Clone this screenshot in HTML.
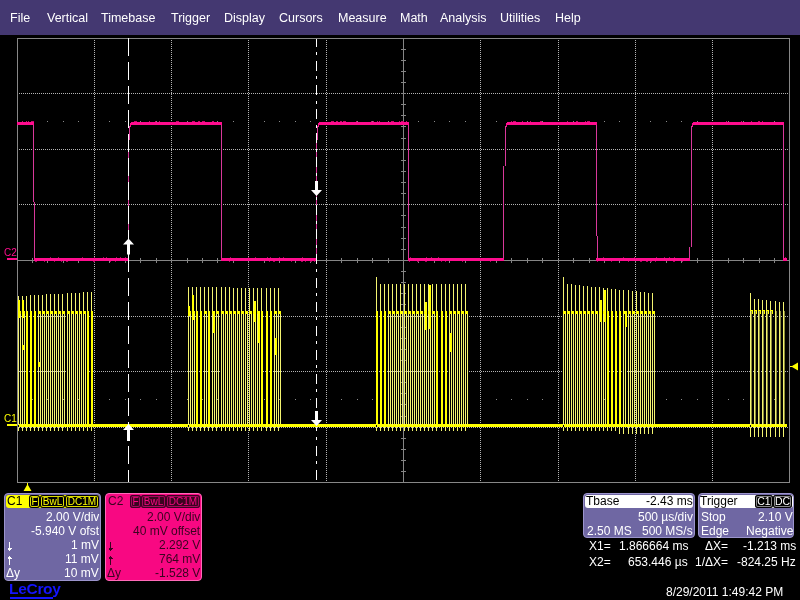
<!DOCTYPE html>
<html><head><meta charset="utf-8"><style>
*{margin:0;padding:0;box-sizing:border-box}
body{width:800px;height:600px;background:#000;overflow:hidden;position:relative;font-family:"Liberation Sans",sans-serif;-webkit-font-smoothing:antialiased}
#menu{position:absolute;left:0;top:0;width:800px;height:35px;background:#443871;color:#fff;font-size:12.5px}
#menu span{position:absolute;top:11px;line-height:14px;will-change:transform}
svg{position:absolute;left:0;top:0}
.t{position:absolute;font-size:12px;line-height:14px;white-space:nowrap;will-change:transform}
.r{text-align:right}
.w{color:#fff}
.k{color:#3a0420}
.pan{position:absolute;border-radius:4px}
.bd{will-change:transform;position:absolute;border-radius:3px;font-size:10px;line-height:13px;height:13px;text-align:center;top:495px}
</style></head><body>
<div id="menu">
<span style="left:10px">File</span>
<span style="left:47px">Vertical</span>
<span style="left:101px">Timebase</span>
<span style="left:171px">Trigger</span>
<span style="left:224px">Display</span>
<span style="left:279px">Cursors</span>
<span style="left:338px">Measure</span>
<span style="left:400px">Math</span>
<span style="left:440px">Analysis</span>
<span style="left:500px">Utilities</span>
<span style="left:555px">Help</span>
</div>
<svg width="800" height="600" shape-rendering="crispEdges">
<path d="M94.5 40V482 M171.5 40V482 M248.5 40V482 M326.5 40V482 M480.5 40V482 M558.5 40V482 M635.5 40V482 M712.5 40V482 M19 93.5H789 M19 149.5H789 M19 204.5H789 M19 316.5H789 M19 371.5H789 M19 427.5H789" stroke="#b4b4b4" stroke-width="1" stroke-dasharray="1 1" fill="none"/>
<path d="M17 260H789 M403 38V482" stroke="#858585" stroke-width="1" transform="translate(0.5 0.5)" fill="none"/>
<path d="M32.5 258V263 M47.5 258V263 M63.5 258V263 M78.5 258V263 M94.5 258V263 M109.5 258V263 M125.5 258V263 M140.5 258V263 M156.5 258V263 M171.5 258V263 M187.5 258V263 M202.5 258V263 M217.5 258V263 M233.5 258V263 M248.5 258V263 M264.5 258V263 M279.5 258V263 M295.5 258V263 M310.5 258V263 M326.5 258V263 M341.5 258V263 M357.5 258V263 M372.5 258V263 M388.5 258V263 M403.5 258V263 M418.5 258V263 M434.5 258V263 M449.5 258V263 M465.5 258V263 M480.5 258V263 M496.5 258V263 M511.5 258V263 M527.5 258V263 M542.5 258V263 M558.5 258V263 M573.5 258V263 M589.5 258V263 M604.5 258V263 M619.5 258V263 M635.5 258V263 M650.5 258V263 M666.5 258V263 M681.5 258V263 M697.5 258V263 M712.5 258V263 M728.5 258V263 M743.5 258V263 M759.5 258V263 M774.5 258V263 M401 49.5H406 M401 60.5H406 M401 71.5H406 M401 82.5H406 M401 93.5H406 M401 104.5H406 M401 115.5H406 M401 126.5H406 M401 138.5H406 M401 149.5H406 M401 160.5H406 M401 171.5H406 M401 182.5H406 M401 193.5H406 M401 204.5H406 M401 215.5H406 M401 227.5H406 M401 238.5H406 M401 249.5H406 M401 260.5H406 M401 271.5H406 M401 282.5H406 M401 293.5H406 M401 304.5H406 M401 316.5H406 M401 327.5H406 M401 338.5H406 M401 349.5H406 M401 360.5H406 M401 371.5H406 M401 382.5H406 M401 393.5H406 M401 404.5H406 M401 416.5H406 M401 427.5H406 M401 438.5H406 M401 449.5H406 M401 460.5H406 M401 471.5H406" stroke="#858585" stroke-width="1" fill="none"/>
<rect x="17.5" y="38.5" width="772" height="444" fill="none" stroke="#878787" stroke-width="1"/>
<rect x="32" y="121" width="1" height="1" fill="#8a8a8a" />
<rect x="47" y="121" width="1" height="1" fill="#8a8a8a" />
<rect x="63" y="121" width="1" height="1" fill="#8a8a8a" />
<rect x="78" y="121" width="1" height="1" fill="#8a8a8a" />
<rect x="109" y="121" width="1" height="1" fill="#8a8a8a" />
<rect x="125" y="121" width="1" height="1" fill="#8a8a8a" />
<rect x="140" y="121" width="1" height="1" fill="#8a8a8a" />
<rect x="156" y="121" width="1" height="1" fill="#8a8a8a" />
<rect x="187" y="121" width="1" height="1" fill="#8a8a8a" />
<rect x="202" y="121" width="1" height="1" fill="#8a8a8a" />
<rect x="217" y="121" width="1" height="1" fill="#8a8a8a" />
<rect x="233" y="121" width="1" height="1" fill="#8a8a8a" />
<rect x="264" y="121" width="1" height="1" fill="#8a8a8a" />
<rect x="279" y="121" width="1" height="1" fill="#8a8a8a" />
<rect x="295" y="121" width="1" height="1" fill="#8a8a8a" />
<rect x="310" y="121" width="1" height="1" fill="#8a8a8a" />
<rect x="341" y="121" width="1" height="1" fill="#8a8a8a" />
<rect x="357" y="121" width="1" height="1" fill="#8a8a8a" />
<rect x="372" y="121" width="1" height="1" fill="#8a8a8a" />
<rect x="388" y="121" width="1" height="1" fill="#8a8a8a" />
<rect x="418" y="121" width="1" height="1" fill="#8a8a8a" />
<rect x="434" y="121" width="1" height="1" fill="#8a8a8a" />
<rect x="449" y="121" width="1" height="1" fill="#8a8a8a" />
<rect x="465" y="121" width="1" height="1" fill="#8a8a8a" />
<rect x="496" y="121" width="1" height="1" fill="#8a8a8a" />
<rect x="511" y="121" width="1" height="1" fill="#8a8a8a" />
<rect x="527" y="121" width="1" height="1" fill="#8a8a8a" />
<rect x="542" y="121" width="1" height="1" fill="#8a8a8a" />
<rect x="573" y="121" width="1" height="1" fill="#8a8a8a" />
<rect x="589" y="121" width="1" height="1" fill="#8a8a8a" />
<rect x="604" y="121" width="1" height="1" fill="#8a8a8a" />
<rect x="619" y="121" width="1" height="1" fill="#8a8a8a" />
<rect x="650" y="121" width="1" height="1" fill="#8a8a8a" />
<rect x="666" y="121" width="1" height="1" fill="#8a8a8a" />
<rect x="681" y="121" width="1" height="1" fill="#8a8a8a" />
<rect x="697" y="121" width="1" height="1" fill="#8a8a8a" />
<rect x="728" y="121" width="1" height="1" fill="#8a8a8a" />
<rect x="743" y="121" width="1" height="1" fill="#8a8a8a" />
<rect x="759" y="121" width="1" height="1" fill="#8a8a8a" />
<rect x="774" y="121" width="1" height="1" fill="#8a8a8a" />
<rect x="32" y="399" width="1" height="1" fill="#8a8a8a" />
<rect x="47" y="399" width="1" height="1" fill="#8a8a8a" />
<rect x="63" y="399" width="1" height="1" fill="#8a8a8a" />
<rect x="78" y="399" width="1" height="1" fill="#8a8a8a" />
<rect x="109" y="399" width="1" height="1" fill="#8a8a8a" />
<rect x="125" y="399" width="1" height="1" fill="#8a8a8a" />
<rect x="140" y="399" width="1" height="1" fill="#8a8a8a" />
<rect x="156" y="399" width="1" height="1" fill="#8a8a8a" />
<rect x="187" y="399" width="1" height="1" fill="#8a8a8a" />
<rect x="202" y="399" width="1" height="1" fill="#8a8a8a" />
<rect x="217" y="399" width="1" height="1" fill="#8a8a8a" />
<rect x="233" y="399" width="1" height="1" fill="#8a8a8a" />
<rect x="264" y="399" width="1" height="1" fill="#8a8a8a" />
<rect x="279" y="399" width="1" height="1" fill="#8a8a8a" />
<rect x="295" y="399" width="1" height="1" fill="#8a8a8a" />
<rect x="310" y="399" width="1" height="1" fill="#8a8a8a" />
<rect x="341" y="399" width="1" height="1" fill="#8a8a8a" />
<rect x="357" y="399" width="1" height="1" fill="#8a8a8a" />
<rect x="372" y="399" width="1" height="1" fill="#8a8a8a" />
<rect x="388" y="399" width="1" height="1" fill="#8a8a8a" />
<rect x="418" y="399" width="1" height="1" fill="#8a8a8a" />
<rect x="434" y="399" width="1" height="1" fill="#8a8a8a" />
<rect x="449" y="399" width="1" height="1" fill="#8a8a8a" />
<rect x="465" y="399" width="1" height="1" fill="#8a8a8a" />
<rect x="496" y="399" width="1" height="1" fill="#8a8a8a" />
<rect x="511" y="399" width="1" height="1" fill="#8a8a8a" />
<rect x="527" y="399" width="1" height="1" fill="#8a8a8a" />
<rect x="542" y="399" width="1" height="1" fill="#8a8a8a" />
<rect x="573" y="399" width="1" height="1" fill="#8a8a8a" />
<rect x="589" y="399" width="1" height="1" fill="#8a8a8a" />
<rect x="604" y="399" width="1" height="1" fill="#8a8a8a" />
<rect x="619" y="399" width="1" height="1" fill="#8a8a8a" />
<rect x="650" y="399" width="1" height="1" fill="#8a8a8a" />
<rect x="666" y="399" width="1" height="1" fill="#8a8a8a" />
<rect x="681" y="399" width="1" height="1" fill="#8a8a8a" />
<rect x="697" y="399" width="1" height="1" fill="#8a8a8a" />
<rect x="728" y="399" width="1" height="1" fill="#8a8a8a" />
<rect x="743" y="399" width="1" height="1" fill="#8a8a8a" />
<rect x="759" y="399" width="1" height="1" fill="#8a8a8a" />
<rect x="774" y="399" width="1" height="1" fill="#8a8a8a" />
<rect x="17" y="122" width="17" height="3" fill="#ff0c8e"/>
<rect x="22" y="121" width="1" height="1" fill="#c00a6c"/>
<rect x="26" y="121" width="1" height="1" fill="#c00a6c"/>
<rect x="28" y="121" width="1" height="1" fill="#c00a6c"/>
<rect x="31" y="121" width="3" height="1" fill="#c00a6c"/>
<rect x="133" y="122" width="89" height="3" fill="#ff0c8e"/>
<rect x="134" y="121" width="3" height="1" fill="#c00a6c"/>
<rect x="149" y="121" width="1" height="1" fill="#c00a6c"/>
<rect x="155" y="121" width="1" height="1" fill="#c00a6c"/>
<rect x="159" y="121" width="1" height="1" fill="#c00a6c"/>
<rect x="176" y="121" width="3" height="1" fill="#c00a6c"/>
<rect x="192" y="121" width="3" height="1" fill="#c00a6c"/>
<rect x="198" y="121" width="2" height="1" fill="#c00a6c"/>
<rect x="202" y="121" width="3" height="1" fill="#c00a6c"/>
<rect x="212" y="121" width="2" height="1" fill="#c00a6c"/>
<rect x="320" y="122" width="89" height="3" fill="#ff0c8e"/>
<rect x="331" y="121" width="3" height="1" fill="#c00a6c"/>
<rect x="336" y="121" width="2" height="1" fill="#c00a6c"/>
<rect x="340" y="121" width="2" height="1" fill="#c00a6c"/>
<rect x="343" y="121" width="3" height="1" fill="#c00a6c"/>
<rect x="356" y="121" width="1" height="1" fill="#c00a6c"/>
<rect x="371" y="121" width="1" height="1" fill="#c00a6c"/>
<rect x="373" y="121" width="1" height="1" fill="#c00a6c"/>
<rect x="377" y="121" width="1" height="1" fill="#c00a6c"/>
<rect x="379" y="121" width="1" height="1" fill="#c00a6c"/>
<rect x="391" y="121" width="3" height="1" fill="#c00a6c"/>
<rect x="399" y="121" width="1" height="1" fill="#c00a6c"/>
<rect x="401" y="121" width="3" height="1" fill="#c00a6c"/>
<rect x="406" y="121" width="1" height="1" fill="#c00a6c"/>
<rect x="507" y="122" width="90" height="3" fill="#ff0c8e"/>
<rect x="511" y="121" width="1" height="1" fill="#c00a6c"/>
<rect x="513" y="121" width="3" height="1" fill="#c00a6c"/>
<rect x="522" y="121" width="1" height="1" fill="#c00a6c"/>
<rect x="530" y="121" width="1" height="1" fill="#c00a6c"/>
<rect x="540" y="121" width="2" height="1" fill="#c00a6c"/>
<rect x="567" y="121" width="1" height="1" fill="#c00a6c"/>
<rect x="576" y="121" width="2" height="1" fill="#c00a6c"/>
<rect x="585" y="121" width="1" height="1" fill="#c00a6c"/>
<rect x="587" y="121" width="3" height="1" fill="#c00a6c"/>
<rect x="695" y="122" width="89" height="3" fill="#ff0c8e"/>
<rect x="726" y="121" width="1" height="1" fill="#c00a6c"/>
<rect x="741" y="121" width="1" height="1" fill="#c00a6c"/>
<rect x="751" y="121" width="1" height="1" fill="#c00a6c"/>
<rect x="758" y="121" width="2" height="1" fill="#c00a6c"/>
<rect x="762" y="121" width="1" height="1" fill="#c00a6c"/>
<rect x="34" y="258" width="95" height="3" fill="#ff0c8e"/>
<rect x="35" y="261" width="2" height="1" fill="#a00a5c"/>
<rect x="44" y="261" width="1" height="1" fill="#a00a5c"/>
<rect x="50" y="257" width="1" height="1" fill="#a00a5c"/>
<rect x="54" y="261" width="1" height="1" fill="#a00a5c"/>
<rect x="58" y="257" width="1" height="1" fill="#a00a5c"/>
<rect x="61" y="261" width="1" height="1" fill="#a00a5c"/>
<rect x="66" y="261" width="2" height="1" fill="#a00a5c"/>
<rect x="82" y="257" width="1" height="1" fill="#a00a5c"/>
<rect x="93" y="261" width="2" height="1" fill="#a00a5c"/>
<rect x="94" y="257" width="1" height="1" fill="#a00a5c"/>
<rect x="103" y="257" width="1" height="1" fill="#a00a5c"/>
<rect x="106" y="257" width="1" height="1" fill="#a00a5c"/>
<rect x="110" y="261" width="1" height="1" fill="#a00a5c"/>
<rect x="115" y="261" width="1" height="1" fill="#a00a5c"/>
<rect x="116" y="257" width="1" height="1" fill="#a00a5c"/>
<rect x="120" y="257" width="1" height="1" fill="#a00a5c"/>
<rect x="125" y="257" width="1" height="1" fill="#a00a5c"/>
<rect x="221" y="258" width="96" height="3" fill="#ff0c8e"/>
<rect x="229" y="261" width="1" height="1" fill="#a00a5c"/>
<rect x="230" y="257" width="1" height="1" fill="#a00a5c"/>
<rect x="248" y="257" width="1" height="1" fill="#a00a5c"/>
<rect x="255" y="257" width="1" height="1" fill="#a00a5c"/>
<rect x="267" y="257" width="1" height="1" fill="#a00a5c"/>
<rect x="269" y="261" width="1" height="1" fill="#a00a5c"/>
<rect x="270" y="257" width="1" height="1" fill="#a00a5c"/>
<rect x="273" y="261" width="2" height="1" fill="#a00a5c"/>
<rect x="279" y="257" width="1" height="1" fill="#a00a5c"/>
<rect x="283" y="257" width="1" height="1" fill="#a00a5c"/>
<rect x="291" y="261" width="1" height="1" fill="#a00a5c"/>
<rect x="301" y="261" width="2" height="1" fill="#a00a5c"/>
<rect x="302" y="257" width="1" height="1" fill="#a00a5c"/>
<rect x="305" y="261" width="1" height="1" fill="#a00a5c"/>
<rect x="310" y="261" width="2" height="1" fill="#a00a5c"/>
<rect x="314" y="261" width="1" height="1" fill="#a00a5c"/>
<rect x="408" y="258" width="96" height="3" fill="#ff0c8e"/>
<rect x="409" y="261" width="1" height="1" fill="#a00a5c"/>
<rect x="410" y="257" width="1" height="1" fill="#a00a5c"/>
<rect x="417" y="261" width="2" height="1" fill="#a00a5c"/>
<rect x="425" y="261" width="2" height="1" fill="#a00a5c"/>
<rect x="426" y="257" width="1" height="1" fill="#a00a5c"/>
<rect x="431" y="257" width="1" height="1" fill="#a00a5c"/>
<rect x="438" y="257" width="1" height="1" fill="#a00a5c"/>
<rect x="441" y="261" width="1" height="1" fill="#a00a5c"/>
<rect x="445" y="261" width="1" height="1" fill="#a00a5c"/>
<rect x="462" y="261" width="1" height="1" fill="#a00a5c"/>
<rect x="490" y="261" width="1" height="1" fill="#a00a5c"/>
<rect x="596" y="258" width="94" height="3" fill="#ff0c8e"/>
<rect x="597" y="261" width="1" height="1" fill="#a00a5c"/>
<rect x="603" y="257" width="1" height="1" fill="#a00a5c"/>
<rect x="611" y="261" width="1" height="1" fill="#a00a5c"/>
<rect x="623" y="257" width="1" height="1" fill="#a00a5c"/>
<rect x="628" y="261" width="1" height="1" fill="#a00a5c"/>
<rect x="634" y="257" width="1" height="1" fill="#a00a5c"/>
<rect x="640" y="261" width="2" height="1" fill="#a00a5c"/>
<rect x="646" y="261" width="2" height="1" fill="#a00a5c"/>
<rect x="650" y="261" width="2" height="1" fill="#a00a5c"/>
<rect x="655" y="261" width="1" height="1" fill="#a00a5c"/>
<rect x="656" y="257" width="1" height="1" fill="#a00a5c"/>
<rect x="664" y="257" width="1" height="1" fill="#a00a5c"/>
<rect x="669" y="257" width="1" height="1" fill="#a00a5c"/>
<rect x="673" y="261" width="2" height="1" fill="#a00a5c"/>
<rect x="674" y="257" width="1" height="1" fill="#a00a5c"/>
<rect x="682" y="261" width="1" height="1" fill="#a00a5c"/>
<rect x="783" y="258" width="4" height="3" fill="#ff0c8e"/>
<rect x="785" y="257" width="1" height="1" fill="#a00a5c"/>
<rect x="33" y="125" width="1" height="77" fill="#d8389a"/>
<rect x="34" y="202" width="1" height="56" fill="#d8389a"/>
<rect x="221" y="125" width="1" height="65" fill="#d8389a"/>
<rect x="221" y="190" width="1" height="68" fill="#d8389a"/>
<rect x="408" y="125" width="1" height="65" fill="#d8389a"/>
<rect x="408" y="190" width="1" height="68" fill="#d8389a"/>
<rect x="596" y="125" width="1" height="111" fill="#d8389a"/>
<rect x="597" y="236" width="1" height="22" fill="#d8389a"/>
<rect x="783" y="125" width="1" height="65" fill="#d8389a"/>
<rect x="783" y="190" width="1" height="68" fill="#d8389a"/>
<rect x="128" y="140" width="1" height="118" fill="#d8389a"/>
<rect x="129" y="126" width="1" height="14" fill="#d8389a"/>
<rect x="130" y="123" width="1" height="4" fill="#ff0c8e"/>
<rect x="131" y="122" width="3" height="3" fill="#ff0c8e"/>
<rect x="316" y="140" width="1" height="118" fill="#d8389a"/>
<rect x="317" y="126" width="1" height="14" fill="#d8389a"/>
<rect x="318" y="123" width="1" height="4" fill="#ff0c8e"/>
<rect x="319" y="122" width="2" height="3" fill="#ff0c8e"/>
<rect x="503" y="166" width="1" height="92" fill="#d8389a"/>
<rect x="505" y="126" width="1" height="40" fill="#d8389a"/>
<rect x="506" y="123" width="1" height="4" fill="#ff0c8e"/>
<rect x="507" y="122" width="1" height="3" fill="#ff0c8e"/>
<rect x="689" y="247" width="1" height="11" fill="#d8389a"/>
<rect x="691" y="126" width="1" height="121" fill="#d8389a"/>
<rect x="692" y="123" width="1" height="4" fill="#ff0c8e"/>
<rect x="693" y="122" width="3" height="3" fill="#ff0c8e"/>
<rect x="18" y="424" width="768" height="3" fill="#ffff00"/>
<rect x="18" y="424" width="76" height="3" fill="#000"/>
<rect x="18" y="296" width="1" height="15" fill="#f4f470"/>
<rect x="18" y="311" width="3" height="3" fill="#ffff00"/>
<rect x="18" y="314" width="1" height="111" fill="#f4f470"/>
<rect x="20" y="314" width="1" height="110" fill="#f4f470"/>
<rect x="19" y="424" width="4" height="3" fill="#ffff00"/>
<rect x="18" y="427" width="1" height="4" fill="#f4f470"/>
<rect x="22" y="296" width="1" height="15" fill="#f4f470"/>
<rect x="22" y="311" width="3" height="3" fill="#ffff00"/>
<rect x="22" y="314" width="1" height="111" fill="#f4f470"/>
<rect x="24" y="314" width="1" height="110" fill="#f4f470"/>
<rect x="23" y="424" width="4" height="3" fill="#ffff00"/>
<rect x="22" y="427" width="1" height="4" fill="#f4f470"/>
<rect x="26" y="296" width="1" height="15" fill="#f4f470"/>
<rect x="26" y="311" width="2" height="114" fill="#ffff00"/>
<rect x="27" y="424" width="4" height="3" fill="#ffff00"/>
<rect x="26" y="427" width="1" height="4" fill="#f4f470"/>
<rect x="30" y="295" width="1" height="16" fill="#f4f470"/>
<rect x="30" y="311" width="2" height="114" fill="#ffff00"/>
<rect x="31" y="424" width="4" height="3" fill="#ffff00"/>
<rect x="30" y="427" width="1" height="4" fill="#f4f470"/>
<rect x="34" y="295" width="1" height="16" fill="#f4f470"/>
<rect x="34" y="311" width="2" height="114" fill="#ffff00"/>
<rect x="35" y="424" width="4" height="3" fill="#ffff00"/>
<rect x="34" y="427" width="1" height="4" fill="#f4f470"/>
<rect x="38" y="295" width="1" height="16" fill="#f4f470"/>
<rect x="38" y="311" width="3" height="3" fill="#ffff00"/>
<rect x="38" y="314" width="1" height="111" fill="#f4f470"/>
<rect x="40" y="314" width="1" height="110" fill="#f4f470"/>
<rect x="39" y="424" width="4" height="3" fill="#ffff00"/>
<rect x="38" y="427" width="1" height="4" fill="#f4f470"/>
<rect x="42" y="295" width="1" height="16" fill="#f4f470"/>
<rect x="42" y="311" width="3" height="3" fill="#ffff00"/>
<rect x="42" y="314" width="1" height="111" fill="#f4f470"/>
<rect x="44" y="314" width="1" height="110" fill="#f4f470"/>
<rect x="43" y="424" width="4" height="3" fill="#ffff00"/>
<rect x="42" y="427" width="1" height="4" fill="#f4f470"/>
<rect x="46" y="294" width="1" height="17" fill="#f4f470"/>
<rect x="46" y="311" width="3" height="3" fill="#ffff00"/>
<rect x="46" y="314" width="1" height="111" fill="#f4f470"/>
<rect x="48" y="314" width="1" height="110" fill="#f4f470"/>
<rect x="47" y="424" width="4" height="3" fill="#ffff00"/>
<rect x="46" y="427" width="1" height="4" fill="#f4f470"/>
<rect x="50" y="294" width="1" height="17" fill="#f4f470"/>
<rect x="50" y="311" width="3" height="3" fill="#ffff00"/>
<rect x="50" y="314" width="1" height="111" fill="#f4f470"/>
<rect x="52" y="314" width="1" height="110" fill="#f4f470"/>
<rect x="51" y="424" width="4" height="3" fill="#ffff00"/>
<rect x="50" y="427" width="1" height="4" fill="#f4f470"/>
<rect x="54" y="294" width="1" height="17" fill="#f4f470"/>
<rect x="54" y="311" width="3" height="3" fill="#ffff00"/>
<rect x="54" y="314" width="1" height="111" fill="#f4f470"/>
<rect x="56" y="314" width="1" height="110" fill="#f4f470"/>
<rect x="55" y="424" width="4" height="3" fill="#ffff00"/>
<rect x="54" y="427" width="1" height="4" fill="#f4f470"/>
<rect x="58" y="294" width="1" height="17" fill="#f4f470"/>
<rect x="58" y="311" width="3" height="3" fill="#ffff00"/>
<rect x="58" y="314" width="1" height="111" fill="#f4f470"/>
<rect x="60" y="314" width="1" height="110" fill="#f4f470"/>
<rect x="59" y="424" width="4" height="3" fill="#ffff00"/>
<rect x="58" y="427" width="1" height="4" fill="#f4f470"/>
<rect x="62" y="294" width="1" height="17" fill="#f4f470"/>
<rect x="62" y="311" width="3" height="3" fill="#ffff00"/>
<rect x="62" y="314" width="1" height="111" fill="#f4f470"/>
<rect x="64" y="314" width="1" height="110" fill="#f4f470"/>
<rect x="63" y="424" width="5" height="3" fill="#ffff00"/>
<rect x="62" y="427" width="1" height="4" fill="#f4f470"/>
<rect x="67" y="293" width="1" height="18" fill="#f4f470"/>
<rect x="67" y="311" width="3" height="3" fill="#ffff00"/>
<rect x="67" y="314" width="1" height="111" fill="#f4f470"/>
<rect x="69" y="314" width="1" height="110" fill="#f4f470"/>
<rect x="68" y="424" width="4" height="3" fill="#ffff00"/>
<rect x="67" y="427" width="1" height="4" fill="#f4f470"/>
<rect x="71" y="293" width="1" height="18" fill="#f4f470"/>
<rect x="71" y="311" width="3" height="3" fill="#ffff00"/>
<rect x="71" y="314" width="1" height="111" fill="#f4f470"/>
<rect x="73" y="314" width="1" height="110" fill="#f4f470"/>
<rect x="72" y="424" width="4" height="3" fill="#ffff00"/>
<rect x="71" y="427" width="1" height="4" fill="#f4f470"/>
<rect x="75" y="293" width="1" height="18" fill="#f4f470"/>
<rect x="75" y="311" width="3" height="3" fill="#ffff00"/>
<rect x="75" y="314" width="1" height="111" fill="#f4f470"/>
<rect x="77" y="314" width="1" height="110" fill="#f4f470"/>
<rect x="76" y="424" width="4" height="3" fill="#ffff00"/>
<rect x="75" y="427" width="1" height="4" fill="#f4f470"/>
<rect x="79" y="293" width="1" height="18" fill="#f4f470"/>
<rect x="79" y="311" width="3" height="3" fill="#ffff00"/>
<rect x="79" y="314" width="1" height="111" fill="#f4f470"/>
<rect x="81" y="314" width="1" height="110" fill="#f4f470"/>
<rect x="80" y="424" width="4" height="3" fill="#ffff00"/>
<rect x="79" y="427" width="1" height="4" fill="#f4f470"/>
<rect x="83" y="292" width="1" height="19" fill="#f4f470"/>
<rect x="83" y="311" width="3" height="3" fill="#ffff00"/>
<rect x="83" y="314" width="1" height="111" fill="#f4f470"/>
<rect x="85" y="314" width="1" height="110" fill="#f4f470"/>
<rect x="84" y="424" width="4" height="3" fill="#ffff00"/>
<rect x="83" y="427" width="1" height="4" fill="#f4f470"/>
<rect x="87" y="292" width="1" height="19" fill="#f4f470"/>
<rect x="87" y="311" width="2" height="114" fill="#ffff00"/>
<rect x="88" y="424" width="4" height="3" fill="#ffff00"/>
<rect x="87" y="427" width="1" height="4" fill="#f4f470"/>
<rect x="91" y="292" width="1" height="19" fill="#f4f470"/>
<rect x="91" y="311" width="2" height="114" fill="#ffff00"/>
<rect x="92" y="424" width="5" height="3" fill="#ffff00"/>
<rect x="91" y="427" width="1" height="4" fill="#f4f470"/>
<rect x="188" y="424" width="93" height="3" fill="#000"/>
<rect x="188" y="287" width="1" height="24" fill="#f4f470"/>
<rect x="188" y="311" width="3" height="3" fill="#ffff00"/>
<rect x="188" y="314" width="1" height="111" fill="#f4f470"/>
<rect x="190" y="314" width="1" height="110" fill="#f4f470"/>
<rect x="189" y="424" width="4" height="3" fill="#ffff00"/>
<rect x="188" y="427" width="1" height="4" fill="#f4f470"/>
<rect x="192" y="287" width="1" height="24" fill="#f4f470"/>
<rect x="192" y="311" width="3" height="3" fill="#ffff00"/>
<rect x="192" y="314" width="1" height="111" fill="#f4f470"/>
<rect x="194" y="314" width="1" height="110" fill="#f4f470"/>
<rect x="193" y="424" width="4" height="3" fill="#ffff00"/>
<rect x="192" y="427" width="1" height="4" fill="#f4f470"/>
<rect x="196" y="287" width="1" height="24" fill="#f4f470"/>
<rect x="196" y="311" width="2" height="114" fill="#ffff00"/>
<rect x="197" y="424" width="4" height="3" fill="#ffff00"/>
<rect x="196" y="427" width="1" height="4" fill="#f4f470"/>
<rect x="200" y="287" width="1" height="24" fill="#f4f470"/>
<rect x="200" y="311" width="2" height="114" fill="#ffff00"/>
<rect x="201" y="424" width="4" height="3" fill="#ffff00"/>
<rect x="200" y="427" width="1" height="4" fill="#f4f470"/>
<rect x="204" y="287" width="1" height="24" fill="#f4f470"/>
<rect x="204" y="311" width="3" height="3" fill="#ffff00"/>
<rect x="204" y="314" width="1" height="111" fill="#f4f470"/>
<rect x="206" y="314" width="1" height="110" fill="#f4f470"/>
<rect x="205" y="424" width="4" height="3" fill="#ffff00"/>
<rect x="204" y="427" width="1" height="4" fill="#f4f470"/>
<rect x="208" y="287" width="1" height="24" fill="#f4f470"/>
<rect x="208" y="311" width="2" height="114" fill="#ffff00"/>
<rect x="209" y="424" width="4" height="3" fill="#ffff00"/>
<rect x="208" y="427" width="1" height="4" fill="#f4f470"/>
<rect x="212" y="287" width="1" height="24" fill="#f4f470"/>
<rect x="212" y="311" width="3" height="3" fill="#ffff00"/>
<rect x="212" y="314" width="1" height="111" fill="#f4f470"/>
<rect x="214" y="314" width="1" height="110" fill="#f4f470"/>
<rect x="213" y="424" width="4" height="3" fill="#ffff00"/>
<rect x="212" y="427" width="1" height="4" fill="#f4f470"/>
<rect x="216" y="287" width="1" height="24" fill="#f4f470"/>
<rect x="216" y="311" width="3" height="3" fill="#ffff00"/>
<rect x="216" y="314" width="1" height="111" fill="#f4f470"/>
<rect x="218" y="314" width="1" height="110" fill="#f4f470"/>
<rect x="217" y="424" width="5" height="3" fill="#ffff00"/>
<rect x="216" y="427" width="1" height="4" fill="#f4f470"/>
<rect x="221" y="287" width="1" height="24" fill="#f4f470"/>
<rect x="221" y="311" width="3" height="3" fill="#ffff00"/>
<rect x="221" y="314" width="1" height="111" fill="#f4f470"/>
<rect x="223" y="314" width="1" height="110" fill="#f4f470"/>
<rect x="222" y="424" width="4" height="3" fill="#ffff00"/>
<rect x="221" y="427" width="1" height="4" fill="#f4f470"/>
<rect x="225" y="287" width="1" height="24" fill="#f4f470"/>
<rect x="225" y="311" width="3" height="3" fill="#ffff00"/>
<rect x="225" y="314" width="1" height="111" fill="#f4f470"/>
<rect x="227" y="314" width="1" height="110" fill="#f4f470"/>
<rect x="226" y="424" width="4" height="3" fill="#ffff00"/>
<rect x="225" y="427" width="1" height="4" fill="#f4f470"/>
<rect x="229" y="287" width="1" height="24" fill="#f4f470"/>
<rect x="229" y="311" width="3" height="3" fill="#ffff00"/>
<rect x="229" y="314" width="1" height="111" fill="#f4f470"/>
<rect x="231" y="314" width="1" height="110" fill="#f4f470"/>
<rect x="230" y="424" width="4" height="3" fill="#ffff00"/>
<rect x="229" y="427" width="1" height="4" fill="#f4f470"/>
<rect x="233" y="288" width="1" height="23" fill="#f4f470"/>
<rect x="233" y="311" width="3" height="3" fill="#ffff00"/>
<rect x="233" y="314" width="1" height="111" fill="#f4f470"/>
<rect x="235" y="314" width="1" height="110" fill="#f4f470"/>
<rect x="234" y="424" width="4" height="3" fill="#ffff00"/>
<rect x="233" y="427" width="1" height="4" fill="#f4f470"/>
<rect x="237" y="288" width="1" height="23" fill="#f4f470"/>
<rect x="237" y="311" width="3" height="3" fill="#ffff00"/>
<rect x="237" y="314" width="1" height="111" fill="#f4f470"/>
<rect x="239" y="314" width="1" height="110" fill="#f4f470"/>
<rect x="238" y="424" width="4" height="3" fill="#ffff00"/>
<rect x="237" y="427" width="1" height="4" fill="#f4f470"/>
<rect x="241" y="288" width="1" height="23" fill="#f4f470"/>
<rect x="241" y="311" width="3" height="3" fill="#ffff00"/>
<rect x="241" y="314" width="1" height="111" fill="#f4f470"/>
<rect x="243" y="314" width="1" height="110" fill="#f4f470"/>
<rect x="242" y="424" width="4" height="3" fill="#ffff00"/>
<rect x="241" y="427" width="1" height="4" fill="#f4f470"/>
<rect x="245" y="288" width="1" height="23" fill="#f4f470"/>
<rect x="245" y="311" width="3" height="3" fill="#ffff00"/>
<rect x="245" y="314" width="1" height="111" fill="#f4f470"/>
<rect x="247" y="314" width="1" height="110" fill="#f4f470"/>
<rect x="246" y="424" width="4" height="3" fill="#ffff00"/>
<rect x="245" y="427" width="1" height="4" fill="#f4f470"/>
<rect x="249" y="288" width="1" height="23" fill="#f4f470"/>
<rect x="249" y="311" width="3" height="3" fill="#ffff00"/>
<rect x="249" y="314" width="1" height="111" fill="#f4f470"/>
<rect x="251" y="314" width="1" height="110" fill="#f4f470"/>
<rect x="250" y="424" width="4" height="3" fill="#ffff00"/>
<rect x="249" y="427" width="1" height="4" fill="#f4f470"/>
<rect x="253" y="288" width="1" height="23" fill="#f4f470"/>
<rect x="253" y="311" width="3" height="3" fill="#ffff00"/>
<rect x="253" y="314" width="1" height="111" fill="#f4f470"/>
<rect x="255" y="314" width="1" height="110" fill="#f4f470"/>
<rect x="254" y="424" width="4" height="3" fill="#ffff00"/>
<rect x="253" y="427" width="1" height="4" fill="#f4f470"/>
<rect x="257" y="288" width="1" height="23" fill="#f4f470"/>
<rect x="257" y="311" width="3" height="3" fill="#ffff00"/>
<rect x="257" y="314" width="1" height="111" fill="#f4f470"/>
<rect x="259" y="314" width="1" height="110" fill="#f4f470"/>
<rect x="258" y="424" width="4" height="3" fill="#ffff00"/>
<rect x="257" y="427" width="1" height="4" fill="#f4f470"/>
<rect x="261" y="288" width="1" height="23" fill="#f4f470"/>
<rect x="261" y="311" width="2" height="114" fill="#ffff00"/>
<rect x="262" y="424" width="5" height="3" fill="#ffff00"/>
<rect x="261" y="427" width="1" height="4" fill="#f4f470"/>
<rect x="266" y="288" width="1" height="23" fill="#f4f470"/>
<rect x="266" y="311" width="2" height="114" fill="#ffff00"/>
<rect x="267" y="424" width="4" height="3" fill="#ffff00"/>
<rect x="266" y="427" width="1" height="4" fill="#f4f470"/>
<rect x="270" y="288" width="1" height="23" fill="#f4f470"/>
<rect x="270" y="311" width="2" height="114" fill="#ffff00"/>
<rect x="271" y="424" width="4" height="3" fill="#ffff00"/>
<rect x="270" y="427" width="1" height="4" fill="#f4f470"/>
<rect x="274" y="288" width="1" height="23" fill="#f4f470"/>
<rect x="274" y="311" width="3" height="3" fill="#ffff00"/>
<rect x="274" y="314" width="1" height="111" fill="#f4f470"/>
<rect x="276" y="314" width="1" height="110" fill="#f4f470"/>
<rect x="275" y="424" width="4" height="3" fill="#ffff00"/>
<rect x="274" y="427" width="1" height="4" fill="#f4f470"/>
<rect x="278" y="288" width="1" height="23" fill="#f4f470"/>
<rect x="278" y="311" width="3" height="3" fill="#ffff00"/>
<rect x="278" y="314" width="1" height="111" fill="#f4f470"/>
<rect x="280" y="314" width="1" height="110" fill="#f4f470"/>
<rect x="279" y="424" width="5" height="3" fill="#ffff00"/>
<rect x="278" y="427" width="1" height="4" fill="#f4f470"/>
<rect x="376" y="424" width="92" height="3" fill="#000"/>
<rect x="376" y="277" width="1" height="34" fill="#f4f470"/>
<rect x="376" y="311" width="2" height="114" fill="#ffff00"/>
<rect x="377" y="424" width="4" height="3" fill="#ffff00"/>
<rect x="376" y="427" width="1" height="4" fill="#f4f470"/>
<rect x="380" y="284" width="1" height="27" fill="#f4f470"/>
<rect x="380" y="311" width="2" height="114" fill="#ffff00"/>
<rect x="381" y="424" width="4" height="3" fill="#ffff00"/>
<rect x="380" y="427" width="1" height="4" fill="#f4f470"/>
<rect x="384" y="284" width="1" height="27" fill="#f4f470"/>
<rect x="384" y="311" width="2" height="114" fill="#ffff00"/>
<rect x="385" y="424" width="4" height="3" fill="#ffff00"/>
<rect x="384" y="427" width="1" height="4" fill="#f4f470"/>
<rect x="388" y="284" width="1" height="27" fill="#f4f470"/>
<rect x="388" y="311" width="3" height="3" fill="#ffff00"/>
<rect x="388" y="314" width="1" height="111" fill="#f4f470"/>
<rect x="390" y="314" width="1" height="110" fill="#f4f470"/>
<rect x="389" y="424" width="4" height="3" fill="#ffff00"/>
<rect x="388" y="427" width="1" height="4" fill="#f4f470"/>
<rect x="392" y="284" width="1" height="27" fill="#f4f470"/>
<rect x="392" y="311" width="3" height="3" fill="#ffff00"/>
<rect x="392" y="314" width="1" height="111" fill="#f4f470"/>
<rect x="394" y="314" width="1" height="110" fill="#f4f470"/>
<rect x="393" y="424" width="4" height="3" fill="#ffff00"/>
<rect x="392" y="427" width="1" height="4" fill="#f4f470"/>
<rect x="396" y="284" width="1" height="27" fill="#f4f470"/>
<rect x="396" y="311" width="3" height="3" fill="#ffff00"/>
<rect x="396" y="314" width="1" height="111" fill="#f4f470"/>
<rect x="398" y="314" width="1" height="110" fill="#f4f470"/>
<rect x="397" y="424" width="4" height="3" fill="#ffff00"/>
<rect x="396" y="427" width="1" height="4" fill="#f4f470"/>
<rect x="400" y="284" width="1" height="27" fill="#f4f470"/>
<rect x="400" y="311" width="3" height="3" fill="#ffff00"/>
<rect x="400" y="314" width="1" height="111" fill="#f4f470"/>
<rect x="402" y="314" width="1" height="110" fill="#f4f470"/>
<rect x="401" y="424" width="4" height="3" fill="#ffff00"/>
<rect x="400" y="427" width="1" height="4" fill="#f4f470"/>
<rect x="404" y="284" width="1" height="27" fill="#f4f470"/>
<rect x="404" y="311" width="3" height="3" fill="#ffff00"/>
<rect x="404" y="314" width="1" height="111" fill="#f4f470"/>
<rect x="406" y="314" width="1" height="110" fill="#f4f470"/>
<rect x="405" y="424" width="4" height="3" fill="#ffff00"/>
<rect x="404" y="427" width="1" height="4" fill="#f4f470"/>
<rect x="408" y="284" width="1" height="27" fill="#f4f470"/>
<rect x="408" y="311" width="3" height="3" fill="#ffff00"/>
<rect x="408" y="314" width="1" height="111" fill="#f4f470"/>
<rect x="410" y="314" width="1" height="110" fill="#f4f470"/>
<rect x="409" y="424" width="4" height="3" fill="#ffff00"/>
<rect x="408" y="427" width="1" height="4" fill="#f4f470"/>
<rect x="412" y="284" width="1" height="27" fill="#f4f470"/>
<rect x="412" y="311" width="3" height="3" fill="#ffff00"/>
<rect x="412" y="314" width="1" height="111" fill="#f4f470"/>
<rect x="414" y="314" width="1" height="110" fill="#f4f470"/>
<rect x="413" y="424" width="4" height="3" fill="#ffff00"/>
<rect x="412" y="427" width="1" height="4" fill="#f4f470"/>
<rect x="416" y="284" width="1" height="27" fill="#f4f470"/>
<rect x="416" y="311" width="3" height="3" fill="#ffff00"/>
<rect x="416" y="314" width="1" height="111" fill="#f4f470"/>
<rect x="418" y="314" width="1" height="110" fill="#f4f470"/>
<rect x="417" y="424" width="4" height="3" fill="#ffff00"/>
<rect x="416" y="427" width="1" height="4" fill="#f4f470"/>
<rect x="420" y="284" width="1" height="27" fill="#f4f470"/>
<rect x="420" y="311" width="3" height="3" fill="#ffff00"/>
<rect x="420" y="314" width="1" height="111" fill="#f4f470"/>
<rect x="422" y="314" width="1" height="110" fill="#f4f470"/>
<rect x="421" y="424" width="4" height="3" fill="#ffff00"/>
<rect x="420" y="427" width="1" height="4" fill="#f4f470"/>
<rect x="424" y="284" width="1" height="27" fill="#f4f470"/>
<rect x="424" y="311" width="3" height="3" fill="#ffff00"/>
<rect x="424" y="314" width="1" height="111" fill="#f4f470"/>
<rect x="426" y="314" width="1" height="110" fill="#f4f470"/>
<rect x="425" y="424" width="4" height="3" fill="#ffff00"/>
<rect x="424" y="427" width="1" height="4" fill="#f4f470"/>
<rect x="428" y="284" width="1" height="27" fill="#f4f470"/>
<rect x="428" y="311" width="3" height="3" fill="#ffff00"/>
<rect x="428" y="314" width="1" height="111" fill="#f4f470"/>
<rect x="430" y="314" width="1" height="110" fill="#f4f470"/>
<rect x="429" y="424" width="4" height="3" fill="#ffff00"/>
<rect x="428" y="427" width="1" height="4" fill="#f4f470"/>
<rect x="432" y="284" width="1" height="27" fill="#f4f470"/>
<rect x="432" y="311" width="3" height="3" fill="#ffff00"/>
<rect x="432" y="314" width="1" height="111" fill="#f4f470"/>
<rect x="434" y="314" width="1" height="110" fill="#f4f470"/>
<rect x="433" y="424" width="4" height="3" fill="#ffff00"/>
<rect x="432" y="427" width="1" height="4" fill="#f4f470"/>
<rect x="436" y="284" width="1" height="27" fill="#f4f470"/>
<rect x="436" y="311" width="2" height="114" fill="#ffff00"/>
<rect x="437" y="424" width="5" height="3" fill="#ffff00"/>
<rect x="436" y="427" width="1" height="4" fill="#f4f470"/>
<rect x="441" y="284" width="1" height="27" fill="#f4f470"/>
<rect x="441" y="311" width="2" height="114" fill="#ffff00"/>
<rect x="442" y="424" width="4" height="3" fill="#ffff00"/>
<rect x="441" y="427" width="1" height="4" fill="#f4f470"/>
<rect x="445" y="284" width="1" height="27" fill="#f4f470"/>
<rect x="445" y="311" width="2" height="114" fill="#ffff00"/>
<rect x="446" y="424" width="4" height="3" fill="#ffff00"/>
<rect x="445" y="427" width="1" height="4" fill="#f4f470"/>
<rect x="449" y="284" width="1" height="27" fill="#f4f470"/>
<rect x="449" y="311" width="3" height="3" fill="#ffff00"/>
<rect x="449" y="314" width="1" height="111" fill="#f4f470"/>
<rect x="451" y="314" width="1" height="110" fill="#f4f470"/>
<rect x="450" y="424" width="4" height="3" fill="#ffff00"/>
<rect x="449" y="427" width="1" height="4" fill="#f4f470"/>
<rect x="453" y="284" width="1" height="27" fill="#f4f470"/>
<rect x="453" y="311" width="3" height="3" fill="#ffff00"/>
<rect x="453" y="314" width="1" height="111" fill="#f4f470"/>
<rect x="455" y="314" width="1" height="110" fill="#f4f470"/>
<rect x="454" y="424" width="4" height="3" fill="#ffff00"/>
<rect x="453" y="427" width="1" height="4" fill="#f4f470"/>
<rect x="457" y="284" width="1" height="27" fill="#f4f470"/>
<rect x="457" y="311" width="3" height="3" fill="#ffff00"/>
<rect x="457" y="314" width="1" height="111" fill="#f4f470"/>
<rect x="459" y="314" width="1" height="110" fill="#f4f470"/>
<rect x="458" y="424" width="4" height="3" fill="#ffff00"/>
<rect x="457" y="427" width="1" height="4" fill="#f4f470"/>
<rect x="461" y="284" width="1" height="27" fill="#f4f470"/>
<rect x="461" y="311" width="3" height="3" fill="#ffff00"/>
<rect x="461" y="314" width="1" height="111" fill="#f4f470"/>
<rect x="463" y="314" width="1" height="110" fill="#f4f470"/>
<rect x="462" y="424" width="4" height="3" fill="#ffff00"/>
<rect x="461" y="427" width="1" height="4" fill="#f4f470"/>
<rect x="465" y="284" width="1" height="27" fill="#f4f470"/>
<rect x="465" y="311" width="3" height="3" fill="#ffff00"/>
<rect x="465" y="314" width="1" height="111" fill="#f4f470"/>
<rect x="467" y="314" width="1" height="110" fill="#f4f470"/>
<rect x="466" y="424" width="5" height="3" fill="#ffff00"/>
<rect x="465" y="427" width="1" height="4" fill="#f4f470"/>
<rect x="563" y="424" width="92" height="3" fill="#000"/>
<rect x="563" y="277" width="1" height="34" fill="#f4f470"/>
<rect x="563" y="311" width="3" height="3" fill="#ffff00"/>
<rect x="563" y="314" width="1" height="111" fill="#f4f470"/>
<rect x="565" y="314" width="1" height="110" fill="#f4f470"/>
<rect x="564" y="424" width="4" height="3" fill="#ffff00"/>
<rect x="563" y="427" width="1" height="4" fill="#f4f470"/>
<rect x="567" y="284" width="1" height="27" fill="#f4f470"/>
<rect x="567" y="311" width="3" height="3" fill="#ffff00"/>
<rect x="567" y="314" width="1" height="111" fill="#f4f470"/>
<rect x="569" y="314" width="1" height="110" fill="#f4f470"/>
<rect x="568" y="424" width="4" height="3" fill="#ffff00"/>
<rect x="567" y="427" width="1" height="4" fill="#f4f470"/>
<rect x="571" y="284" width="1" height="27" fill="#f4f470"/>
<rect x="571" y="311" width="3" height="3" fill="#ffff00"/>
<rect x="571" y="314" width="1" height="111" fill="#f4f470"/>
<rect x="573" y="314" width="1" height="110" fill="#f4f470"/>
<rect x="572" y="424" width="4" height="3" fill="#ffff00"/>
<rect x="571" y="427" width="1" height="4" fill="#f4f470"/>
<rect x="575" y="285" width="1" height="26" fill="#f4f470"/>
<rect x="575" y="311" width="3" height="3" fill="#ffff00"/>
<rect x="575" y="314" width="1" height="111" fill="#f4f470"/>
<rect x="577" y="314" width="1" height="110" fill="#f4f470"/>
<rect x="576" y="424" width="4" height="3" fill="#ffff00"/>
<rect x="575" y="427" width="1" height="4" fill="#f4f470"/>
<rect x="579" y="285" width="1" height="26" fill="#f4f470"/>
<rect x="579" y="311" width="3" height="3" fill="#ffff00"/>
<rect x="579" y="314" width="1" height="111" fill="#f4f470"/>
<rect x="581" y="314" width="1" height="110" fill="#f4f470"/>
<rect x="580" y="424" width="4" height="3" fill="#ffff00"/>
<rect x="579" y="427" width="1" height="4" fill="#f4f470"/>
<rect x="583" y="286" width="1" height="25" fill="#f4f470"/>
<rect x="583" y="311" width="3" height="3" fill="#ffff00"/>
<rect x="583" y="314" width="1" height="111" fill="#f4f470"/>
<rect x="585" y="314" width="1" height="110" fill="#f4f470"/>
<rect x="584" y="424" width="4" height="3" fill="#ffff00"/>
<rect x="583" y="427" width="1" height="4" fill="#f4f470"/>
<rect x="587" y="286" width="1" height="25" fill="#f4f470"/>
<rect x="587" y="311" width="3" height="3" fill="#ffff00"/>
<rect x="587" y="314" width="1" height="111" fill="#f4f470"/>
<rect x="589" y="314" width="1" height="110" fill="#f4f470"/>
<rect x="588" y="424" width="4" height="3" fill="#ffff00"/>
<rect x="587" y="427" width="1" height="4" fill="#f4f470"/>
<rect x="591" y="287" width="1" height="24" fill="#f4f470"/>
<rect x="591" y="311" width="3" height="3" fill="#ffff00"/>
<rect x="591" y="314" width="1" height="111" fill="#f4f470"/>
<rect x="593" y="314" width="1" height="110" fill="#f4f470"/>
<rect x="592" y="424" width="4" height="3" fill="#ffff00"/>
<rect x="591" y="427" width="1" height="4" fill="#f4f470"/>
<rect x="595" y="287" width="1" height="24" fill="#f4f470"/>
<rect x="595" y="311" width="3" height="3" fill="#ffff00"/>
<rect x="595" y="314" width="1" height="111" fill="#f4f470"/>
<rect x="597" y="314" width="1" height="110" fill="#f4f470"/>
<rect x="596" y="424" width="4" height="3" fill="#ffff00"/>
<rect x="595" y="427" width="1" height="4" fill="#f4f470"/>
<rect x="599" y="287" width="1" height="24" fill="#f4f470"/>
<rect x="599" y="311" width="3" height="3" fill="#ffff00"/>
<rect x="599" y="314" width="1" height="111" fill="#f4f470"/>
<rect x="601" y="314" width="1" height="110" fill="#f4f470"/>
<rect x="600" y="424" width="4" height="3" fill="#ffff00"/>
<rect x="599" y="427" width="1" height="4" fill="#f4f470"/>
<rect x="603" y="288" width="1" height="23" fill="#f4f470"/>
<rect x="603" y="311" width="3" height="3" fill="#ffff00"/>
<rect x="603" y="314" width="1" height="111" fill="#f4f470"/>
<rect x="605" y="314" width="1" height="110" fill="#f4f470"/>
<rect x="604" y="424" width="4" height="3" fill="#ffff00"/>
<rect x="603" y="427" width="1" height="4" fill="#f4f470"/>
<rect x="607" y="288" width="1" height="23" fill="#f4f470"/>
<rect x="607" y="311" width="2" height="114" fill="#ffff00"/>
<rect x="608" y="424" width="4" height="3" fill="#ffff00"/>
<rect x="607" y="427" width="1" height="4" fill="#f4f470"/>
<rect x="611" y="289" width="1" height="22" fill="#f4f470"/>
<rect x="611" y="311" width="2" height="114" fill="#ffff00"/>
<rect x="612" y="424" width="4" height="3" fill="#ffff00"/>
<rect x="611" y="427" width="1" height="4" fill="#f4f470"/>
<rect x="615" y="289" width="1" height="22" fill="#f4f470"/>
<rect x="615" y="311" width="2" height="114" fill="#ffff00"/>
<rect x="616" y="424" width="4" height="3" fill="#ffff00"/>
<rect x="615" y="427" width="1" height="4" fill="#f4f470"/>
<rect x="619" y="290" width="1" height="21" fill="#f4f470"/>
<rect x="619" y="311" width="2" height="114" fill="#ffff00"/>
<rect x="620" y="424" width="4" height="3" fill="#ffff00"/>
<rect x="619" y="427" width="1" height="7" fill="#f4f470"/>
<rect x="623" y="290" width="1" height="21" fill="#f4f470"/>
<rect x="623" y="311" width="3" height="3" fill="#ffff00"/>
<rect x="623" y="314" width="1" height="111" fill="#f4f470"/>
<rect x="625" y="314" width="1" height="110" fill="#f4f470"/>
<rect x="624" y="424" width="5" height="3" fill="#ffff00"/>
<rect x="623" y="427" width="1" height="7" fill="#f4f470"/>
<rect x="628" y="290" width="1" height="21" fill="#f4f470"/>
<rect x="628" y="311" width="3" height="3" fill="#ffff00"/>
<rect x="628" y="314" width="1" height="111" fill="#f4f470"/>
<rect x="630" y="314" width="1" height="110" fill="#f4f470"/>
<rect x="629" y="424" width="4" height="3" fill="#ffff00"/>
<rect x="628" y="427" width="1" height="7" fill="#f4f470"/>
<rect x="632" y="291" width="1" height="20" fill="#f4f470"/>
<rect x="632" y="311" width="3" height="3" fill="#ffff00"/>
<rect x="632" y="314" width="1" height="111" fill="#f4f470"/>
<rect x="634" y="314" width="1" height="110" fill="#f4f470"/>
<rect x="633" y="424" width="4" height="3" fill="#ffff00"/>
<rect x="632" y="427" width="1" height="7" fill="#f4f470"/>
<rect x="636" y="291" width="1" height="20" fill="#f4f470"/>
<rect x="636" y="311" width="3" height="3" fill="#ffff00"/>
<rect x="636" y="314" width="1" height="111" fill="#f4f470"/>
<rect x="638" y="314" width="1" height="110" fill="#f4f470"/>
<rect x="637" y="424" width="4" height="3" fill="#ffff00"/>
<rect x="636" y="427" width="1" height="7" fill="#f4f470"/>
<rect x="640" y="292" width="1" height="19" fill="#f4f470"/>
<rect x="640" y="311" width="3" height="3" fill="#ffff00"/>
<rect x="640" y="314" width="1" height="111" fill="#f4f470"/>
<rect x="642" y="314" width="1" height="110" fill="#f4f470"/>
<rect x="641" y="424" width="4" height="3" fill="#ffff00"/>
<rect x="640" y="427" width="1" height="7" fill="#f4f470"/>
<rect x="644" y="292" width="1" height="19" fill="#f4f470"/>
<rect x="644" y="311" width="3" height="3" fill="#ffff00"/>
<rect x="644" y="314" width="1" height="111" fill="#f4f470"/>
<rect x="646" y="314" width="1" height="110" fill="#f4f470"/>
<rect x="645" y="424" width="4" height="3" fill="#ffff00"/>
<rect x="644" y="427" width="1" height="7" fill="#f4f470"/>
<rect x="648" y="293" width="1" height="18" fill="#f4f470"/>
<rect x="648" y="311" width="3" height="3" fill="#ffff00"/>
<rect x="648" y="314" width="1" height="111" fill="#f4f470"/>
<rect x="650" y="314" width="1" height="110" fill="#f4f470"/>
<rect x="649" y="424" width="4" height="3" fill="#ffff00"/>
<rect x="648" y="427" width="1" height="7" fill="#f4f470"/>
<rect x="652" y="293" width="1" height="18" fill="#f4f470"/>
<rect x="652" y="311" width="3" height="3" fill="#ffff00"/>
<rect x="652" y="314" width="1" height="111" fill="#f4f470"/>
<rect x="654" y="314" width="1" height="110" fill="#f4f470"/>
<rect x="653" y="424" width="5" height="3" fill="#ffff00"/>
<rect x="652" y="427" width="1" height="7" fill="#f4f470"/>
<rect x="750" y="424" width="36" height="3" fill="#000"/>
<rect x="750" y="293" width="1" height="18" fill="#f4f470"/>
<rect x="750" y="310" width="3" height="4" fill="#ffff00"/>
<rect x="750" y="311" width="1" height="114" fill="#f4f470"/>
<rect x="751" y="311" width="1" height="114" fill="#8a8a3a"/>
<rect x="751" y="424" width="4" height="3" fill="#ffff00"/>
<rect x="750" y="427" width="1" height="10" fill="#f4f470"/>
<rect x="754" y="299" width="1" height="12" fill="#f4f470"/>
<rect x="754" y="310" width="3" height="4" fill="#ffff00"/>
<rect x="754" y="311" width="1" height="114" fill="#f4f470"/>
<rect x="755" y="311" width="1" height="114" fill="#8a8a3a"/>
<rect x="755" y="424" width="4" height="3" fill="#ffff00"/>
<rect x="754" y="427" width="1" height="10" fill="#f4f470"/>
<rect x="758" y="299" width="1" height="12" fill="#f4f470"/>
<rect x="758" y="310" width="3" height="4" fill="#ffff00"/>
<rect x="758" y="311" width="1" height="114" fill="#f4f470"/>
<rect x="759" y="311" width="1" height="114" fill="#8a8a3a"/>
<rect x="759" y="424" width="4" height="3" fill="#ffff00"/>
<rect x="758" y="427" width="1" height="10" fill="#f4f470"/>
<rect x="762" y="300" width="1" height="11" fill="#f4f470"/>
<rect x="762" y="310" width="3" height="4" fill="#ffff00"/>
<rect x="762" y="311" width="1" height="114" fill="#f4f470"/>
<rect x="763" y="311" width="1" height="114" fill="#8a8a3a"/>
<rect x="763" y="424" width="4" height="3" fill="#ffff00"/>
<rect x="762" y="427" width="1" height="10" fill="#f4f470"/>
<rect x="766" y="300" width="1" height="11" fill="#f4f470"/>
<rect x="766" y="310" width="3" height="4" fill="#ffff00"/>
<rect x="766" y="311" width="1" height="114" fill="#f4f470"/>
<rect x="767" y="311" width="1" height="114" fill="#8a8a3a"/>
<rect x="767" y="424" width="4" height="3" fill="#ffff00"/>
<rect x="766" y="427" width="1" height="10" fill="#f4f470"/>
<rect x="770" y="301" width="1" height="10" fill="#f4f470"/>
<rect x="770" y="310" width="3" height="4" fill="#ffff00"/>
<rect x="770" y="311" width="1" height="114" fill="#f4f470"/>
<rect x="771" y="311" width="1" height="114" fill="#8a8a3a"/>
<rect x="771" y="424" width="5" height="3" fill="#ffff00"/>
<rect x="770" y="427" width="1" height="10" fill="#f4f470"/>
<rect x="775" y="301" width="1" height="10" fill="#f4f470"/>
<rect x="775" y="311" width="1" height="114" fill="#f4f470"/>
<rect x="776" y="311" width="1" height="114" fill="#8a8a3a"/>
<rect x="776" y="424" width="4" height="3" fill="#ffff00"/>
<rect x="775" y="427" width="1" height="10" fill="#f4f470"/>
<rect x="779" y="302" width="1" height="9" fill="#f4f470"/>
<rect x="779" y="311" width="1" height="114" fill="#f4f470"/>
<rect x="780" y="311" width="1" height="114" fill="#8a8a3a"/>
<rect x="780" y="424" width="4" height="3" fill="#ffff00"/>
<rect x="779" y="427" width="1" height="10" fill="#f4f470"/>
<rect x="783" y="302" width="1" height="9" fill="#f4f470"/>
<rect x="783" y="311" width="1" height="114" fill="#f4f470"/>
<rect x="784" y="311" width="1" height="114" fill="#8a8a3a"/>
<rect x="784" y="424" width="3" height="3" fill="#ffff00"/>
<rect x="783" y="427" width="1" height="10" fill="#f4f470"/>
<rect x="188" y="306" width="2" height="10" fill="#ffff00"/>
<rect x="192" y="295" width="2" height="25" fill="#ffff00"/>
<rect x="213" y="311" width="2" height="22" fill="#ffff00"/>
<rect x="254" y="301" width="2" height="21" fill="#ffff00"/>
<rect x="258" y="311" width="2" height="32" fill="#ffff00"/>
<rect x="275" y="338" width="2" height="17" fill="#ffff00"/>
<rect x="425" y="302" width="2" height="28" fill="#ffff00"/>
<rect x="429" y="285" width="2" height="44" fill="#ffff00"/>
<rect x="450" y="333" width="2" height="19" fill="#ffff00"/>
<rect x="600" y="300" width="2" height="22" fill="#ffff00"/>
<rect x="604" y="290" width="2" height="32" fill="#ffff00"/>
<rect x="625" y="311" width="2" height="16" fill="#ffff00"/>
<rect x="18" y="300" width="2" height="18" fill="#ffff00"/>
<rect x="22" y="300" width="2" height="18" fill="#ffff00"/>
<rect x="38" y="362" width="2" height="5" fill="#ffff00"/>
<rect x="22" y="345" width="2" height="5" fill="#ffff00"/>
<path d="M128.5 38V56 M128.5 62V80 M128.5 86V104 M128.5 110V128 M128.5 134V152 M128.5 158V176 M128.5 182V200 M128.5 206V224 M128.5 230V248 M128.5 254V272 M128.5 278V296 M128.5 302V320 M128.5 326V344 M128.5 350V368 M128.5 374V392 M128.5 398V416 M128.5 422V440 M128.5 446V464 M128.5 470V482" stroke="#ffffff" stroke-width="1" fill="none"/>
<path d="M316.5 39V46.9 M316.5 52.4V55.4 M316.5 60.97V70.97 M316.5 76.47V79.47 M316.5 85.03999999999999V95.03999999999999 M316.5 100.53999999999999V103.53999999999999 M316.5 109.10999999999999V119.10999999999999 M316.5 124.60999999999999V127.60999999999999 M316.5 133.17999999999998V143.17999999999998 M316.5 148.67999999999998V151.67999999999998 M316.5 157.24999999999997V167.24999999999997 M316.5 172.74999999999997V175.74999999999997 M316.5 181.31999999999996V191.31999999999996 M316.5 196.81999999999996V199.81999999999996 M316.5 205.38999999999996V215.38999999999996 M316.5 220.88999999999996V223.88999999999996 M316.5 229.45999999999995V239.45999999999995 M316.5 244.95999999999995V247.95999999999995 M316.5 253.52999999999994V263.53 M316.5 269.03V272.03 M316.5 277.59999999999997V287.59999999999997 M316.5 293.09999999999997V296.09999999999997 M316.5 301.66999999999996V311.66999999999996 M316.5 317.16999999999996V320.16999999999996 M316.5 325.73999999999995V335.73999999999995 M316.5 341.23999999999995V344.23999999999995 M316.5 349.80999999999995V359.80999999999995 M316.5 365.30999999999995V368.30999999999995 M316.5 373.87999999999994V383.87999999999994 M316.5 389.37999999999994V392.37999999999994 M316.5 397.94999999999993V407.94999999999993 M316.5 427V431 M316.5 446V455.5 M316.5 437V440 M316.5 470V479.5 M316.5 461V464" stroke="#ffffff" stroke-width="1" fill="none"/>
<path d="M128.5 238.5L134.0 244.5H130.0V254.5H127.0V244.5H123.0Z" fill="#fff" shape-rendering="auto"/>
<path d="M128.5 424L134.0 430H130.0V441H127.0V430H123.0Z" fill="#fff" shape-rendering="auto"/>
<path d="M316.5 196L322.0 190H318.0V181H315.0V190H311.0Z" fill="#fff" shape-rendering="auto"/>
<path d="M316.5 426L322.0 420H318.0V411H315.0V420H311.0Z" fill="#fff" shape-rendering="auto"/>
<path d="M27 483H28V485L31.5 491H23.5L27 485Z" fill="#ffff00" shape-rendering="auto"/>
<path d="M790 366H792L798 362.5V370.5L792 367H790Z" fill="#ffff00" shape-rendering="auto"/>
<rect x="7" y="258" width="10" height="2" fill="#ff0c8e" />
<rect x="7" y="424" width="10" height="2" fill="#ffff00" />
</svg>
<div class="t" style="left:4px;top:247px;color:#ff0c8e;font-size:10px;line-height:12px">C2</div>
<div class="t" style="left:4px;top:413px;color:#ffff00;font-size:10px;line-height:12px">C1</div>

<div class="pan" style="left:4px;top:493px;width:97px;height:88px;background:#6f67a3;border:1px solid #9b94cc"></div>
<div class="pan" style="left:6px;top:495px;width:93px;height:13px;background:#ffff00;border-radius:3px"></div>
<div class="t" style="left:7px;top:494px;color:#000;font-size:12px">C1</div>
<div class="bd" style="left:29px;width:11px;background:#000;color:#ff0;box-shadow:inset 0 0 0 1px #000,inset 0 0 0 2px #dd0">F</div>
<div class="bd" style="left:40px;width:25px;background:#000;color:#ff0;box-shadow:inset 0 0 0 1px #000,inset 0 0 0 2px #dd0">BwL</div>
<div class="bd" style="left:65px;width:34px;background:#000;color:#ff0;box-shadow:inset 0 0 0 1px #000,inset 0 0 0 2px #dd0">DC1M</div>
<div class="t w r" style="right:701px;top:510px">2.00 V/div</div>
<div class="t w r" style="right:701px;top:524px">-5.940 V ofst</div>
<div class="t w r" style="right:701px;top:538px">1 mV</div>
<div class="t w r" style="right:701px;top:552px">11 mV</div>
<div class="t w" style="left:6px;top:566px">&#916;y</div>
<div class="t w r" style="right:701px;top:566px">10 mV</div>

<div class="pan" style="left:105px;top:493px;width:97px;height:88px;background:#f80882;border:1px solid #ff6ab8"></div>
<div class="t k" style="left:108px;top:494px;font-size:12px">C2</div>
<div class="bd" style="left:130px;width:11px;background:#3a0420;color:#f80882;box-shadow:inset 0 0 0 1px #3a0420,inset 0 0 0 2px #a8065e">F</div>
<div class="bd" style="left:141px;width:25px;background:#3a0420;color:#f80882;box-shadow:inset 0 0 0 1px #3a0420,inset 0 0 0 2px #a8065e">BwL</div>
<div class="bd" style="left:166px;width:34px;background:#3a0420;color:#f80882;box-shadow:inset 0 0 0 1px #3a0420,inset 0 0 0 2px #a8065e">DC1M</div>
<div class="t k r" style="right:600px;top:510px">2.00 V/div</div>
<div class="t k r" style="right:600px;top:524px">40 mV offset</div>
<div class="t k r" style="right:600px;top:538px">2.292 V</div>
<div class="t k r" style="right:600px;top:552px">764 mV</div>
<div class="t k" style="left:107px;top:566px">&#916;y</div>
<div class="t k r" style="right:600px;top:566px">-1.528 V</div>
<svg width="800" height="600" shape-rendering="crispEdges"><rect x="9" y="542" width="1" height="9" fill="#fff"/><rect x="8" y="548" width="1" height="2" fill="#fff"/><rect x="10" y="548" width="1" height="2" fill="#fff"/><rect x="11" y="548" width="1" height="1" fill="#fff"/><rect x="9" y="556" width="1" height="9" fill="#fff"/><rect x="8" y="557" width="1" height="2" fill="#fff"/><rect x="10" y="557" width="1" height="2" fill="#fff"/><rect x="11" y="558" width="1" height="1" fill="#fff"/><rect x="110" y="542" width="1" height="9" fill="#3a0420"/><rect x="109" y="548" width="1" height="2" fill="#3a0420"/><rect x="111" y="548" width="1" height="2" fill="#3a0420"/><rect x="112" y="548" width="1" height="1" fill="#3a0420"/><rect x="110" y="556" width="1" height="9" fill="#3a0420"/><rect x="109" y="557" width="1" height="2" fill="#3a0420"/><rect x="111" y="557" width="1" height="2" fill="#3a0420"/><rect x="112" y="558" width="1" height="1" fill="#3a0420"/></svg>

<div class="t" style="left:9px;top:580px;color:#1414ff;font-size:15.5px;line-height:18px;font-weight:bold;letter-spacing:-0.3px">LeCroy</div><div style="position:absolute;left:10px;top:597px;width:43px;height:2px;background:#1414ff"></div>

<div class="pan" style="left:583px;top:493px;width:112px;height:45px;background:#6f67a3;border:1px solid #9b94cc"></div>
<div class="pan" style="left:585px;top:495px;width:108px;height:13px;background:#fff;border-radius:3px"></div>
<div class="t" style="left:586px;top:494px;color:#000;font-size:12px">Tbase</div>
<div class="t r" style="right:107px;top:494px;color:#000;font-size:12px">-2.43 ms</div>
<div class="t w r" style="right:107px;top:510px">500 &#181;s/div</div>
<div class="t w" style="left:587px;top:524px">2.50 MS</div>
<div class="t w r" style="right:107px;top:524px">500 MS/s</div>

<div class="pan" style="left:698px;top:493px;width:96px;height:45px;background:#6f67a3;border:1px solid #9b94cc"></div>
<div class="pan" style="left:700px;top:495px;width:93px;height:13px;background:#fff;border-radius:3px"></div>
<div class="t" style="left:700px;top:494px;color:#000;font-size:12px">Trigger</div>
<div class="bd" style="left:755px;width:18px;background:#000;color:#fff;font-size:10.5px;box-shadow:inset 0 0 0 1px #000,inset 0 0 0 2px #888">C1</div>
<div class="bd" style="left:773px;width:19px;background:#000;color:#fff;font-size:10.5px;box-shadow:inset 0 0 0 1px #000,inset 0 0 0 2px #888">DC</div>
<div class="t w" style="left:701px;top:510px">Stop</div>
<div class="t w r" style="right:7px;top:510px">2.10 V</div>
<div class="t w" style="left:701px;top:524px">Edge</div>
<div class="t w r" style="right:7px;top:524px">Negative</div>

<div class="t w" style="left:589px;top:539px">X1=</div>
<div class="t w r" style="right:112px;top:539px">1.866664 ms</div>
<div class="t w" style="left:589px;top:555px">X2=</div>
<div class="t w r" style="right:112px;top:555px">653.446 &#181;s</div>
<div class="t w r" style="right:72px;top:539px">&#916;X=</div>
<div class="t w r" style="right:4px;top:539px">-1.213 ms</div>
<div class="t w r" style="right:72px;top:555px">1/&#916;X=</div>
<div class="t w r" style="right:4px;top:555px">-824.25 Hz</div>
<div class="t w" style="right:17px;top:585px">8/29/2011 1:49:42 PM</div>
</body></html>
